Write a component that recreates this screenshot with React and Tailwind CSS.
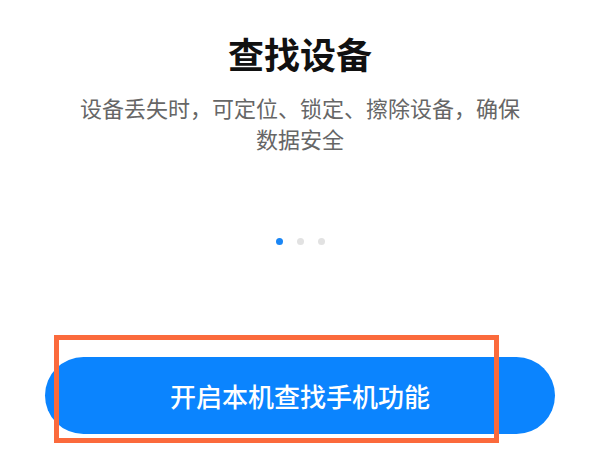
import React from "react";

const cjk = { fontFamily: '"Noto Sans CJK SC", "Noto Sans", sans-serif' };

export default function App() {
  return (
    <div className="relative w-[600px] h-[450px] bg-white overflow-hidden" style={cjk}>
      <div className="flex flex-col items-center">
        {/* title */}
        <h1 className="mt-[31px] text-[36px] leading-[44px] font-bold text-[#111]">
          查找设备
        </h1>
        <p className="mt-[17px] px-[78px] text-center text-[22px] leading-[31px] text-[#666]">
          设备丢失时，可定位、锁定、擦除设备，确保数据安全
        </p>

        {/* pager dots */}
        <div className="mt-[84px] flex items-center gap-[14px]">
          <span className="w-[7px] h-[7px] rounded-full bg-[#1a86f5]" />
          <span className="w-[7px] h-[7px] rounded-full bg-[#e2e2e2]" />
          <span className="w-[7px] h-[7px] rounded-full bg-[#e2e2e2]" />
        </div>
      </div>

      {/* action button */}
      <div className="mt-[112px] px-[45px]">
        <button className="w-full h-[77px] rounded-full bg-[#0b84fe] text-white text-[26px] font-medium">
          开启本机查找手机功能
        </button>
      </div>

      {/* annotation highlight */}
      <div className="absolute left-[54px] top-[335px] w-[445px] h-[108px] border-[5px] border-[#fb6a3c]" />
    </div>
  );
}
